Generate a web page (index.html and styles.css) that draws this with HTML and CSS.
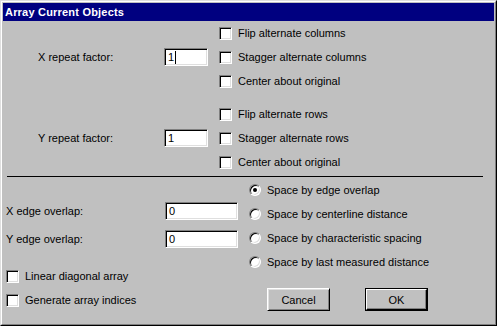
FILE: index.html
```html
<!DOCTYPE html>
<html>
<head>
<meta charset="utf-8">
<link rel="stylesheet" href="styles.css">
</head>
<body>
<div class="window">
  <div class="frame">
    <div class="title">Array Current Objects</div>
    <div class="body">
      <div class="repeat-group">
        <div class="cell chk-cell r1"><span class="chk"></span><span class="lbl">Flip alternate columns</span></div>
        <div class="cell label r2">X repeat factor:</div>
        <div class="cell input-cell r2"><span class="field small">1<span class="caret"></span></span></div>
        <div class="cell chk-cell r2"><span class="chk"></span><span class="lbl">Stagger alternate columns</span></div>
        <div class="cell chk-cell r3"><span class="chk"></span><span class="lbl">Center about original</span></div>
      </div>
      <div class="repeat-group second">
        <div class="cell chk-cell r1"><span class="chk"></span><span class="lbl">Flip alternate rows</span></div>
        <div class="cell label r2">Y repeat factor:</div>
        <div class="cell input-cell r2"><span class="field small">1</span></div>
        <div class="cell chk-cell r2"><span class="chk"></span><span class="lbl">Stagger alternate rows</span></div>
        <div class="cell chk-cell r3"><span class="chk"></span><span class="lbl">Center about original</span></div>
      </div>
      <div class="separator"></div>
      <div class="lower">
        <div class="left-col">
          <div class="edge-row first"><span class="edge-label">X edge overlap:</span><span class="field wide">0</span></div>
          <div class="edge-row"><span class="edge-label">Y edge overlap:</span><span class="field wide">0</span></div>
          <div class="opt-row first-opt"><span class="chk"></span><span class="lbl">Linear diagonal array</span></div>
          <div class="opt-row"><span class="chk"></span><span class="lbl">Generate array indices</span></div>
        </div>
        <div class="right-col">
          <div class="radio-row"><span class="radio checked"></span><span class="lbl">Space by edge overlap</span></div>
          <div class="radio-row"><span class="radio"></span><span class="lbl">Space by centerline distance</span></div>
          <div class="radio-row"><span class="radio"></span><span class="lbl">Space by characteristic spacing</span></div>
          <div class="radio-row"><span class="radio"></span><span class="lbl">Space by last measured distance</span></div>
          <div class="buttons">
            <span class="btn">Cancel</span>
            <span class="btn default"><span class="btn-inner">OK</span></span>
          </div>
        </div>
      </div>
    </div>
  </div>
</div>
</body>
</html>
```
FILE: styles.css
```css
* { box-sizing: border-box; }
html, body { margin: 0; padding: 0; background: #c0c0c0; }
body {
  font-family: "Liberation Sans", Arial, sans-serif;
  font-size: 11px;
  color: #000;
}
.window {
  width: 497px;
  height: 326px;
  border: 1px solid;
  border-color: #dfdfdf #000 #000 #dfdfdf;
  background: #c0c0c0;
}
.frame {
  height: 100%;
  border: 1px solid;
  border-color: #fff #808080 #808080 #fff;
  padding: 1px;
  display: flex;
  flex-direction: column;
}
.title {
  height: 18px;
  background: #000080;
  color: #fff;
  font-weight: bold;
  font-size: 11px;
  line-height: 18px;
  padding-left: 2px;
  letter-spacing: 0.2px;
}
.body { flex: 1; }

.repeat-group {
  display: grid;
  grid-template-columns: 35px 126px 55px 1fr;
  grid-template-rows: 24px 24px 24px;
}
.repeat-group.second { margin-top: 9px; }
.cell { display: flex; align-items: center; }
.r1 { grid-row: 1; }
.r2 { grid-row: 2; }
.r3 { grid-row: 3; }
.label { grid-column: 2; }
.input-cell { grid-column: 3; }
.chk-cell { grid-column: 4; }
.repeat-group .label { grid-column: 1 / span 2; padding-left: 35px; }

.field {
  display: inline-flex;
  align-items: center;
  height: 18px;
  background: #fff;
  border: 1px solid;
  border-color: #808080 #fff #fff #808080;
  box-shadow: inset 1px 1px 0 #000, inset -1px -1px 0 #dfdfdf;
  padding-left: 3px;
  line-height: 1;
}
.field.small { width: 44px; }
.field.wide { width: 73px; }
.caret {
  display: inline-block;
  width: 1px;
  height: 13px;
  background: #000;
  margin-left: 1px;
}

.chk {
  display: inline-block;
  width: 13px;
  height: 13px;
  flex: none;
  background: #fff;
  border: 1px solid;
  border-color: #808080 #fff #fff #808080;
  box-shadow: inset 1px 1px 0 #000, inset -1px -1px 0 #dfdfdf;
}
.lbl { margin-left: 6px; white-space: nowrap; }

.separator {
  margin: 2px 0 0 4px;
  width: 476px;
  height: 1px;
  background: #000;
}

.lower {
  display: grid;
  grid-template-columns: 246px 1fr;
}
.left-col { padding-left: 3px; display: flex; flex-direction: column; }
.edge-row { display: flex; align-items: center; height: 18px; margin-top: 10px; }
.edge-row.first { margin-top: 25px; }
.edge-label { width: 159px; }
.opt-row { display: flex; align-items: center; height: 24px; }
.opt-row.first-opt { margin-top: 16px; }

.right-col { display: flex; flex-direction: column; padding-top: 1px; }
.radio-row { display: flex; align-items: center; height: 24px; }
.radio {
  display: inline-block;
  width: 12px;
  height: 12px;
  flex: none;
  border-radius: 50%;
  background: #fff;
  border: 1px solid;
  border-color: #808080 #fff #fff #808080;
  box-shadow: inset 1px 1px 0 #000, inset -1px -1px 0 #dfdfdf;
  position: relative;
}
.radio.checked::after {
  content: "";
  position: absolute;
  left: 3px;
  top: 3px;
  width: 4px;
  height: 4px;
  border-radius: 50%;
  background: #000;
}
.radio-row .lbl { margin-left: 6px; }

.buttons {
  display: flex;
  gap: 35px;
  margin-top: 14px;
  padding-left: 18px;
}
.btn {
  display: flex;
  align-items: center;
  justify-content: center;
  width: 63px;
  height: 23px;
  background: #c0c0c0;
  border: 1px solid;
  border-color: #fff #000 #000 #fff;
  box-shadow: inset 1px 1px 0 #dfdfdf, inset -1px -1px 0 #808080;
}
.btn.default {
  border: 1px solid #000;
  box-shadow: none;
  padding: 0;
}
.btn-inner {
  display: flex;
  align-items: center;
  justify-content: center;
  width: 100%;
  height: 100%;
  border: 1px solid;
  border-color: #fff #000 #000 #fff;
  box-shadow: inset -1px -1px 0 #808080;
}
```
